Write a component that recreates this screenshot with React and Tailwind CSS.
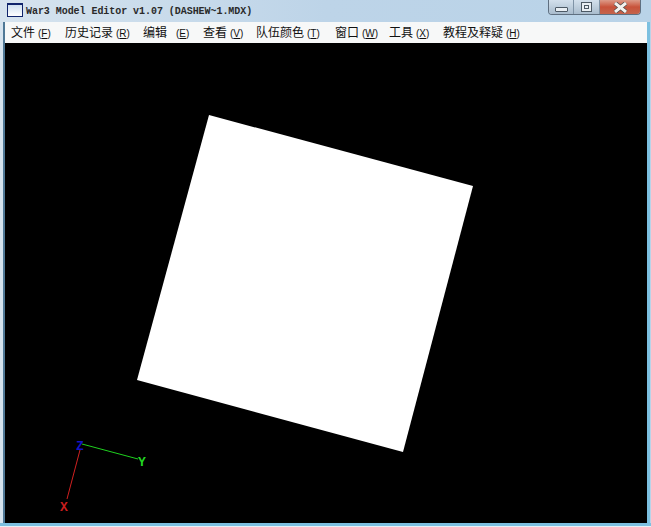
import React from "react";

const menus = [
  { label: "文件", key: "F", w: "w-[54px]", gap: "ml-[3px]" },
  { label: "历史记录", key: "R", w: "w-[78px]", gap: "ml-[3px]" },
  { label: "编辑", key: "E", w: "w-[60px]", gap: "ml-[9px]" },
  { label: "查看", key: "V", w: "w-[53px]", gap: "ml-[3px]" },
  { label: "队伍颜色", key: "T", w: "w-[79px]", gap: "ml-[3px]" },
  { label: "窗口", key: "W", w: "w-[54px]", gap: "ml-[3px]" },
  { label: "工具", key: "X", w: "w-[54px]", gap: "ml-[3px]" },
  { label: "教程及释疑", key: "H", w: "w-[90px]", gap: "ml-[3px]" },
];

function WindowButtons() {
  return (
    <div className="flex h-[15px] w-[93px] overflow-hidden rounded-b-[4px] border border-t-0 border-[#5f6f80]">
      <div className="flex w-[25px] items-end justify-center border-r border-[#7f93a6] bg-gradient-to-b from-[#d3e0ec] to-[#a9bccd] pb-[2px]">
        <div className="h-[5px] w-[13px] rounded-[1px] border border-[#4c5965] bg-[#e8eef3]"></div>
      </div>
      <div className="flex w-[26px] items-center justify-center border-r border-[#7f93a6] bg-gradient-to-b from-[#d3e0ec] to-[#a9bccd]">
        <div className="flex h-[10px] w-[11px] items-center justify-center border border-[#4c5965] bg-[#e8eef3]">
          <div className="h-[4px] w-[5px] border border-[#4c5965]"></div>
        </div>
      </div>
      <div className="flex flex-1 items-center justify-center bg-gradient-to-b from-[#dc9a88] via-[#c8523a] to-[#c4644c]">
        <svg width="17" height="11" viewBox="0 0 17 11">
          <path d="M3 1 L14 10 M14 1 L3 10" stroke="#4a4a4a" strokeWidth="4.4" />
          <path d="M3 1 L14 10 M14 1 L3 10" stroke="#f4f2ee" strokeWidth="3" />
        </svg>
      </div>
    </div>
  );
}

function Viewport() {
  return (
    <svg className="block h-full w-full" viewBox="0 0 642 480">
      <g transform="translate(-5 -43)">
        <polygon points="209,115 473,186 403,452 137,380" fill="#ffffff" />
        <line x1="82" y1="444" x2="138" y2="459" stroke="#1fd11f" strokeWidth="1" />
        <line x1="80" y1="450" x2="67" y2="499" stroke="#d02020" strokeWidth="1" />
        <g fontFamily="Liberation Mono" fontSize="13" fontWeight="700" textAnchor="middle">
          <text x="80" y="450" fill="#1414c8">Z</text>
          <text x="142" y="466" fill="#22d622">Y</text>
          <text x="64" y="511" fill="#c81e1e">X</text>
        </g>
      </g>
    </svg>
  );
}

export default function App() {
  return (
    <div className="flex h-[527px] w-[651px] flex-col overflow-hidden bg-gradient-to-r from-[#d6e3ee] via-[#bdd4e8] to-[#b9d3e8]">
      <div className="flex h-[22px] shrink-0 pl-[7px] pr-[10px]">
        <div className="mt-[3px] h-[14px] w-[16px] border border-t-2 border-[#10246b] bg-gradient-to-b from-[#cfe0f0] to-white"></div>
        <div className="ml-[3px] mt-[6px] font-['Liberation_Mono',monospace] text-[10px] font-bold leading-[12px] tracking-[-0.05px] text-[#2a2a2a]">
          War3 Model Editor v1.07 (DASHEW~1.MDX)
        </div>
        <div className="ml-auto">
          <WindowButtons />
        </div>
      </div>
      <div className="flex min-h-0 flex-1 pl-[3px] pr-px">
        <div className="flex min-w-0 flex-1 flex-col border-l-2 border-r-[3px] border-l-[#4f7896] border-r-[#7cc0e0]">
          <div className="flex h-[21px] shrink-0 items-center bg-[#f7f8f8] pl-[6px] text-[12px] leading-[21px] text-[#111]">
            {menus.map((m) => (
              <div key={m.label} className={`${m.w} shrink-0 whitespace-nowrap font-['Noto_Sans_CJK_SC',sans-serif]`}>
                {m.label}
                <span className={`${m.gap} font-['Liberation_Sans',sans-serif] text-[10px]`}>
                  (<span className="underline">{m.key}</span>)
                </span>
              </div>
            ))}
          </div>
          <div className="min-h-0 flex-1 bg-black">
            <Viewport />
          </div>
        </div>
      </div>
      <div className="h-[3px] shrink-0 bg-[#7cc0e0]"></div>
      <div className="h-px shrink-0 bg-[#e8f2f8]"></div>
    </div>
  );
}
